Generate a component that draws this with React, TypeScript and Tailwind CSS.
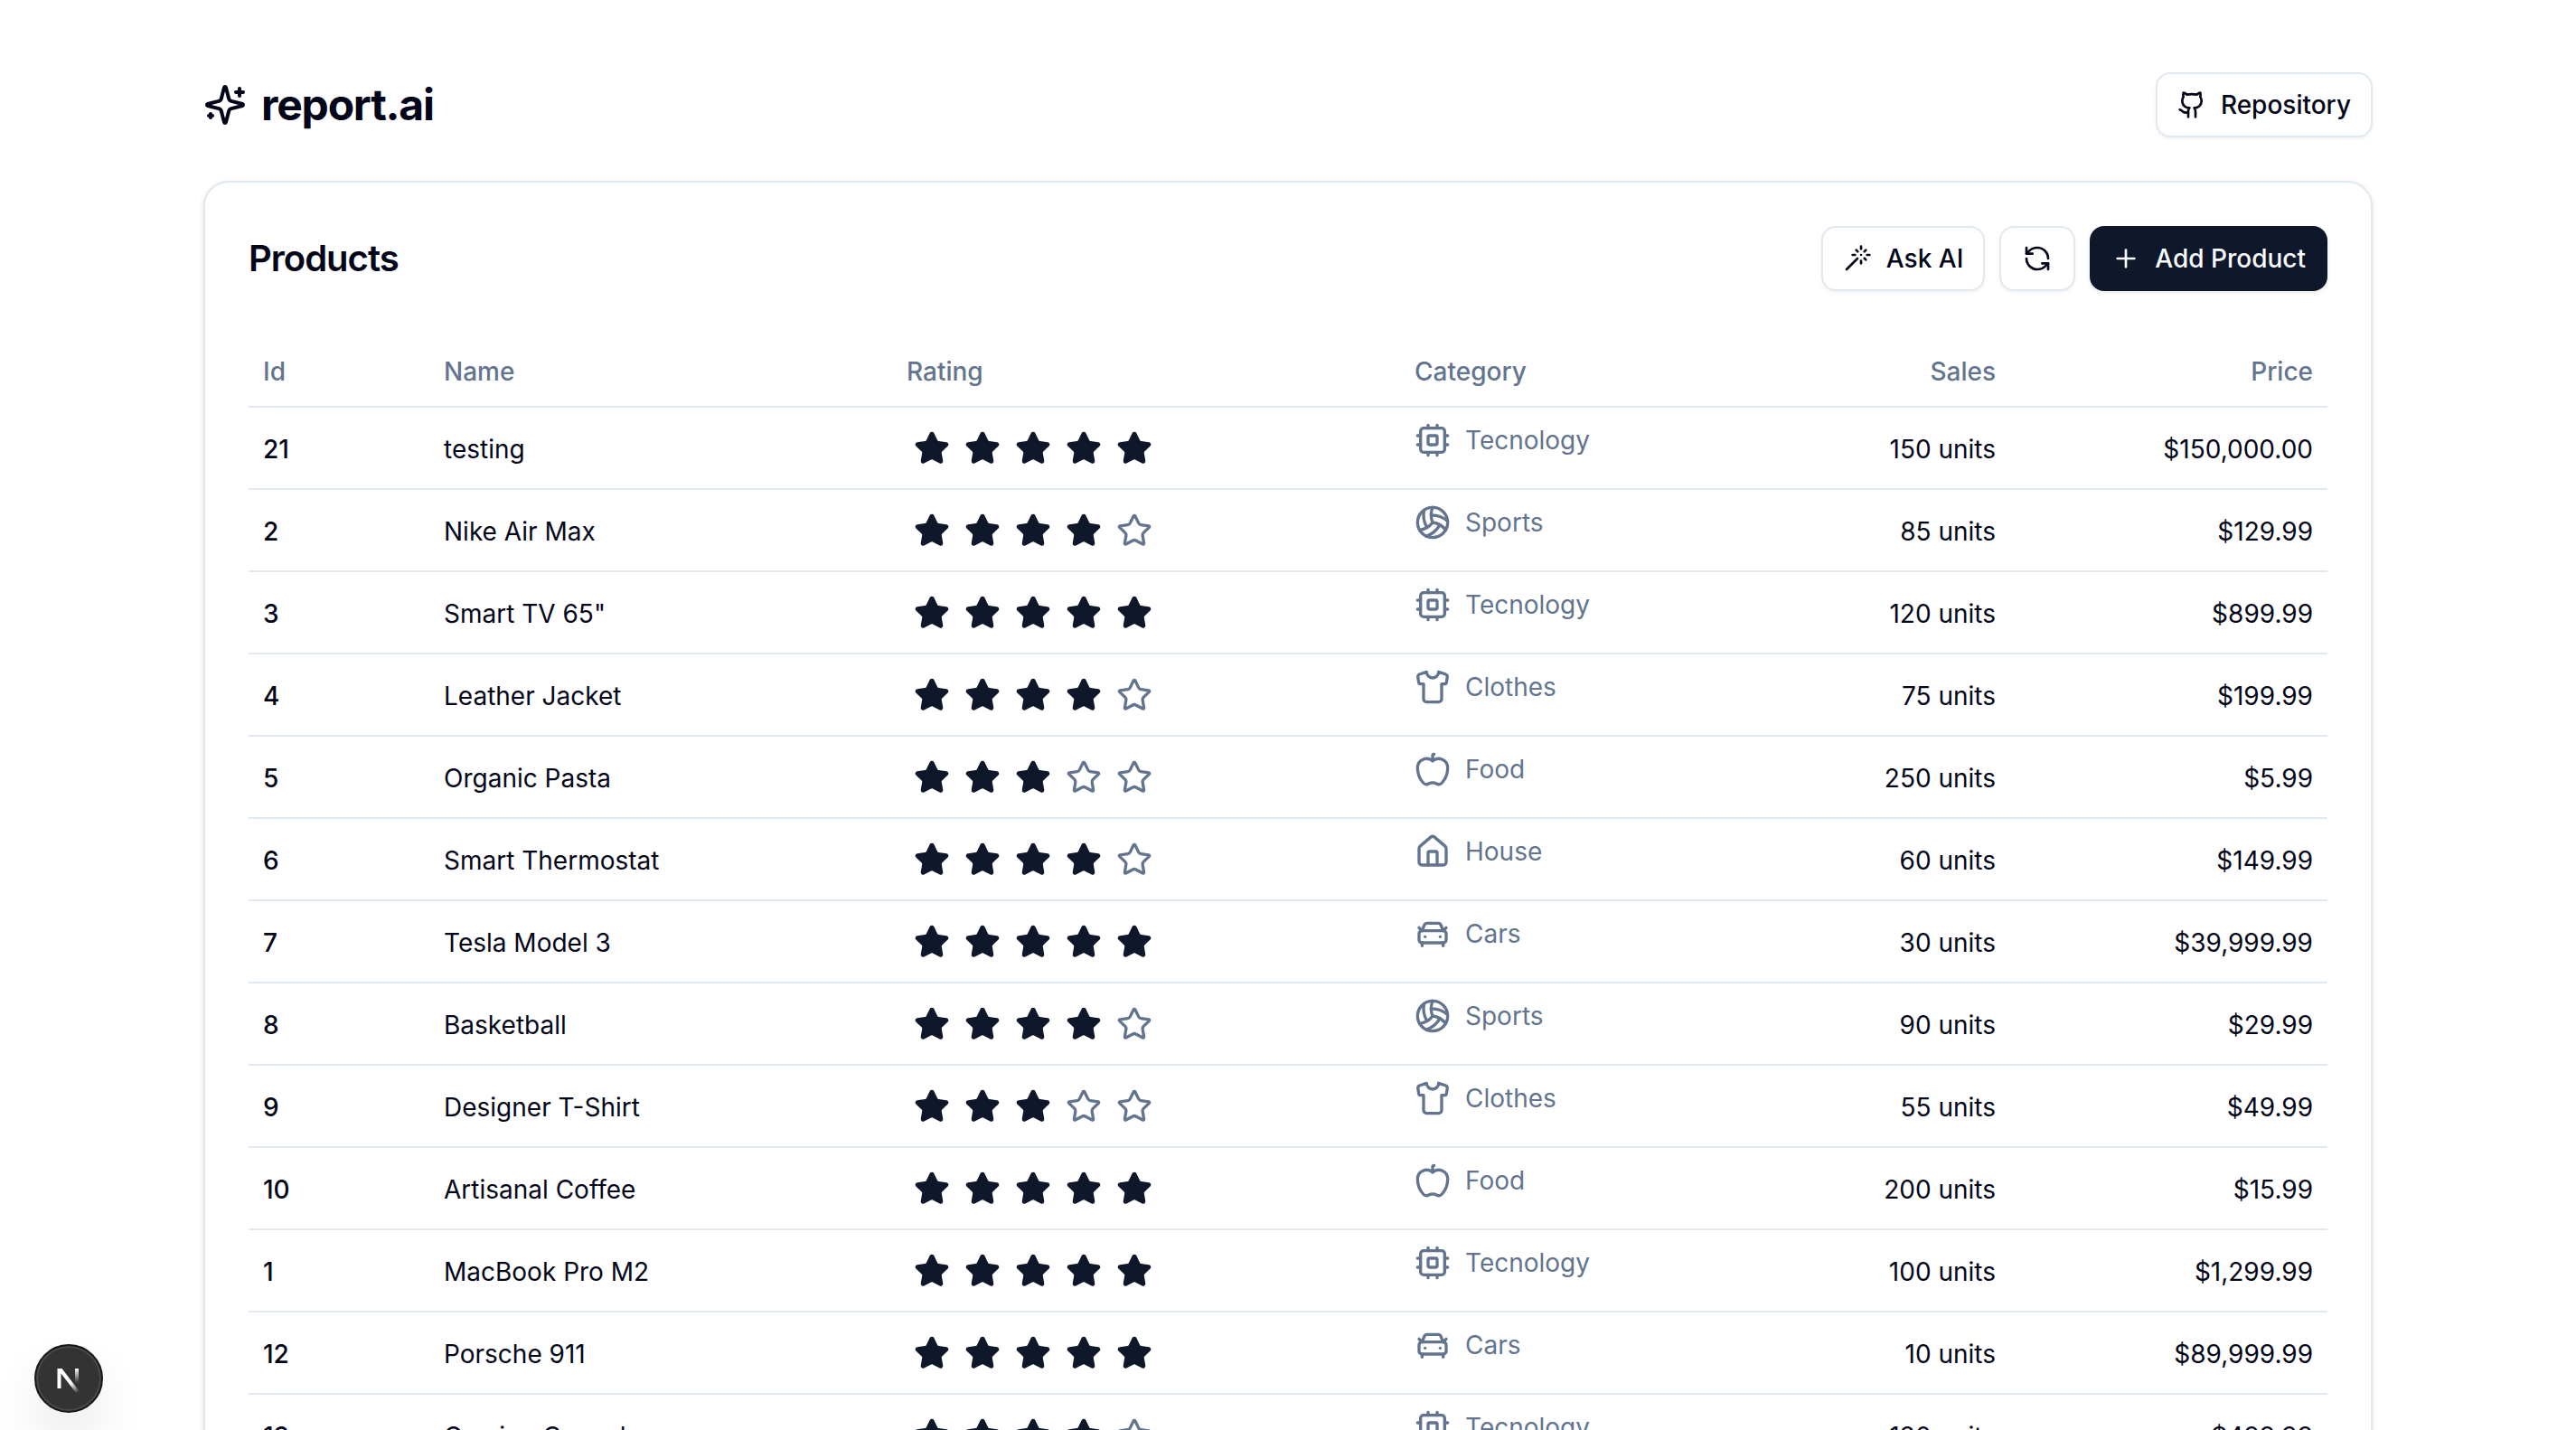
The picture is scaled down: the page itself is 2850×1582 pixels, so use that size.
import {
  Apple, CarFront, Github, House, Plus, RefreshCcw, Shirt, Star, Volleyball,
} from "lucide-react";
import type { ComponentType } from "react";

type Category = "Tecnology" | "Sports" | "Clothes" | "Food" | "House" | "Cars";

type Product = {
  id: number;
  name: string;
  rating: number;
  category: Category;
  sales: number;
  price: number;
};

function CpuIcon({ className }: { className?: string }) {
  return (
    <svg className={className} viewBox="0 0 24 24" fill="none" stroke="currentColor" strokeWidth="2" strokeLinecap="round" strokeLinejoin="round" aria-hidden="true">
      <rect width="16" height="16" x="4" y="4" rx="2" />
      <rect width="6" height="6" x="9" y="9" rx="1" />
      <path d="M15 2v2" />
      <path d="M15 20v2" />
      <path d="M2 15h2" />
      <path d="M2 9h2" />
      <path d="M20 15h2" />
      <path d="M20 9h2" />
      <path d="M9 2v2" />
      <path d="M9 20v2" />
    </svg>
  );
}

const categoryIcons: Record<Category, ComponentType<{ className?: string }>> = {
  Tecnology: CpuIcon,
  Sports: Volleyball,
  Clothes: Shirt,
  Food: Apple,
  House: House,
  Cars: CarFront,
};

const products: Product[] = [
  { id: 21, name: "testing", rating: 5, category: "Tecnology", sales: 150, price: 150000 },
  { id: 2, name: "Nike Air Max", rating: 4, category: "Sports", sales: 85, price: 129.99 },
  { id: 3, name: 'Smart TV 65"', rating: 5, category: "Tecnology", sales: 120, price: 899.99 },
  { id: 4, name: "Leather Jacket", rating: 4, category: "Clothes", sales: 75, price: 199.99 },
  { id: 5, name: "Organic Pasta", rating: 3, category: "Food", sales: 250, price: 5.99 },
  { id: 6, name: "Smart Thermostat", rating: 4, category: "House", sales: 60, price: 149.99 },
  { id: 7, name: "Tesla Model 3", rating: 5, category: "Cars", sales: 30, price: 39999.99 },
  { id: 8, name: "Basketball", rating: 4, category: "Sports", sales: 90, price: 29.99 },
  { id: 9, name: "Designer T-Shirt", rating: 3, category: "Clothes", sales: 55, price: 49.99 },
  { id: 10, name: "Artisanal Coffee", rating: 5, category: "Food", sales: 200, price: 15.99 },
  { id: 1, name: "MacBook Pro M2", rating: 5, category: "Tecnology", sales: 100, price: 1299.99 },
  { id: 12, name: "Porsche 911", rating: 5, category: "Cars", sales: 10, price: 89999.99 },
  { id: 13, name: "Gaming Console", rating: 4, category: "Tecnology", sales: 180, price: 499.99 },
];

const currency = new Intl.NumberFormat("en-US", { style: "currency", currency: "USD" });

const outline =
  "inline-flex h-18 items-center justify-center gap-4 rounded-2xl border-2 border-slate-200 bg-white px-[22px] font-medium shadow-[0_2px_4px_rgba(0,0,0,0.05)]";

function SparklesIcon() {
  return (
    <svg className="size-12" viewBox="0 0 24 24" fill="none" stroke="currentColor" strokeWidth="2" strokeLinecap="round" strokeLinejoin="round" aria-hidden="true">
      <path d="M9.937 15.5A2 2 0 0 0 8.5 14.063l-6.135-1.582a.5.5 0 0 1 0-.962L8.5 9.936A2 2 0 0 0 9.937 8.5l1.582-6.135a.5.5 0 0 1 .963 0L14.063 8.5A2 2 0 0 0 15.5 9.937l6.135 1.581a.5.5 0 0 1 0 .964L15.5 14.063a2 2 0 0 0-1.437 1.437l-1.582 6.135a.5.5 0 0 1-.963 0z" />
      <path d="M20 3v4" />
      <path d="M22 5h-4" />
      <path d="M4 17v2" />
      <path d="M5 18H3" />
    </svg>
  );
}

function WandIcon() {
  return (
    <svg className="size-8" viewBox="0 0 24 24" fill="none" stroke="currentColor" strokeWidth="2" strokeLinecap="round" strokeLinejoin="round" aria-hidden="true">
      <path d="M15 4V2" />
      <path d="M15 16v-2" />
      <path d="M8 9h2" />
      <path d="M20 9h2" />
      <path d="M17.8 11.8 19 13" />
      <path d="M15 9h.01" />
      <path d="M17.8 6.2 19 5" />
      <path d="m3 21 9-9" />
      <path d="M12.2 6.2 11 5" />
    </svg>
  );
}

function Rating({ value }: { value: number }) {
  return (
    <div className="flex" role="img" aria-label={`${value} out of 5`}>
      {[1, 2, 3, 4, 5].map((n) => (
        <span key={n} className="grid size-14 place-items-center">
          <Star className={n <= value ? "size-10 fill-slate-900 text-slate-900" : "size-10 text-slate-500"} />
        </span>
      ))}
    </div>
  );
}

function ProductRow({ product }: { product: Product }) {
  const Icon = categoryIcons[product.category];
  return (
    <tr className="h-[91px] border-b-2 border-slate-200">
      <td className="px-4 pt-[18px] pb-4 font-medium">{product.id}</td>
      <td className="px-4 pt-[18px] pb-4">{product.name}</td>
      <td className="px-4 py-4"><Rating value={product.rating} /></td>
      <td className="px-4 py-4 align-top text-slate-500">
        <div className="flex items-center gap-4">
          <Icon className="size-10" />
          {product.category}
        </div>
      </td>
      <td className="px-4 pt-[18px] pb-4 text-right">{product.sales} units</td>
      <td className="px-4 pt-[18px] pb-4 text-right">{currency.format(product.price)}</td>
    </tr>
  );
}

function DevBadge() {
  return (
    <button
      type="button"
      aria-label="Open developer tools"
      className="fixed bottom-[19px] left-[38px] grid size-[76px] place-items-center rounded-full border-2 border-[#171717] bg-[#333] shadow-[inset_0_0_0_2px_#4a4a4a,0_32px_64px_-16px_rgba(0,0,0,0.24)]"
    >
      <svg className="size-10" viewBox="0 0 40 40" fill="none" aria-hidden="true">
        <defs>
          <linearGradient id="diag" x1="22" y1="26" x2="30" y2="36" gradientUnits="userSpaceOnUse">
            <stop stopColor="#fff" />
            <stop offset="1" stopColor="#fff" stopOpacity="0" />
          </linearGradient>
          <linearGradient id="stem" x1="29" y1="9" x2="29" y2="25" gradientUnits="userSpaceOnUse">
            <stop stopColor="#fff" />
            <stop offset="1" stopColor="#fff" stopOpacity="0" />
          </linearGradient>
        </defs>
        <path d="M7.5 9H12.5L32 34.5L29 37L11.5 14.5V31H7.5Z" fill="url(#diag)" />
        <path d="M27 9h4v16h-4Z" fill="url(#stem)" />
      </svg>
    </button>
  );
}

export default function App() {
  return (
    <div className="h-screen overflow-hidden bg-white px-12 pt-20 font-['Inter',sans-serif] text-[28px] leading-10 text-slate-950">
      <div className="mx-auto flex max-w-[2400px] flex-col gap-12">
        <header className="flex items-center justify-between">
          <h1 className="flex items-center gap-4 text-5xl font-bold tracking-tight">
            <SparklesIcon />
            report.ai
          </h1>
          <a href="#repository" className={outline}>
            <Github className="size-8" />
            Repository
          </a>
        </header>

        <main className="rounded-[28px] border-2 border-slate-200 bg-white p-12 shadow-[0_2px_6px_rgba(0,0,0,0.1),0_2px_4px_-2px_rgba(0,0,0,0.1)]">
          <div className="flex items-center justify-between">
            <h2 className="text-[40px] font-semibold tracking-tight">Products</h2>
            <div className="flex gap-4">
              <button type="button" className={outline}>
                <WandIcon />
                Ask AI
              </button>
              <button type="button" aria-label="Refresh" className={outline}>
                <RefreshCcw className="mx-0.5 size-8" />
              </button>
              <button type="button" className="inline-flex h-18 items-center gap-4 rounded-2xl bg-slate-900 px-6 font-medium text-slate-50 shadow-[0_2px_4px_rgba(0,0,0,0.1)]">
                <Plus className="size-8" />
                Add Product
              </button>
            </div>
          </div>

          <table className="mt-12 w-full table-fixed border-collapse">
            <colgroup>
              <col className="w-[200px]" />
              <col className="w-[512px]" />
              <col className="w-[562px]" />
              <col className="w-[338px]" />
              <col className="w-[337px]" />
              <col className="w-[351px]" />
            </colgroup>
            <thead>
              <tr className="h-20 border-b-2 border-slate-200 text-left text-slate-500">
                <th scope="col" className="px-4 pt-0.5 font-medium">Id</th>
                <th scope="col" className="px-4 pt-0.5 font-medium">Name</th>
                <th scope="col" className="px-4 pt-0.5 font-medium">Rating</th>
                <th scope="col" className="px-4 pt-0.5 font-medium">Category</th>
                <th scope="col" className="px-4 pt-0.5 text-right font-medium">Sales</th>
                <th scope="col" className="px-4 pt-0.5 text-right font-medium">Price</th>
              </tr>
            </thead>
            <tbody>
              {products.map((p) => (
                <ProductRow key={p.id} product={p} />
              ))}
            </tbody>
          </table>
        </main>
      </div>
      <DevBadge />
    </div>
  );
}
